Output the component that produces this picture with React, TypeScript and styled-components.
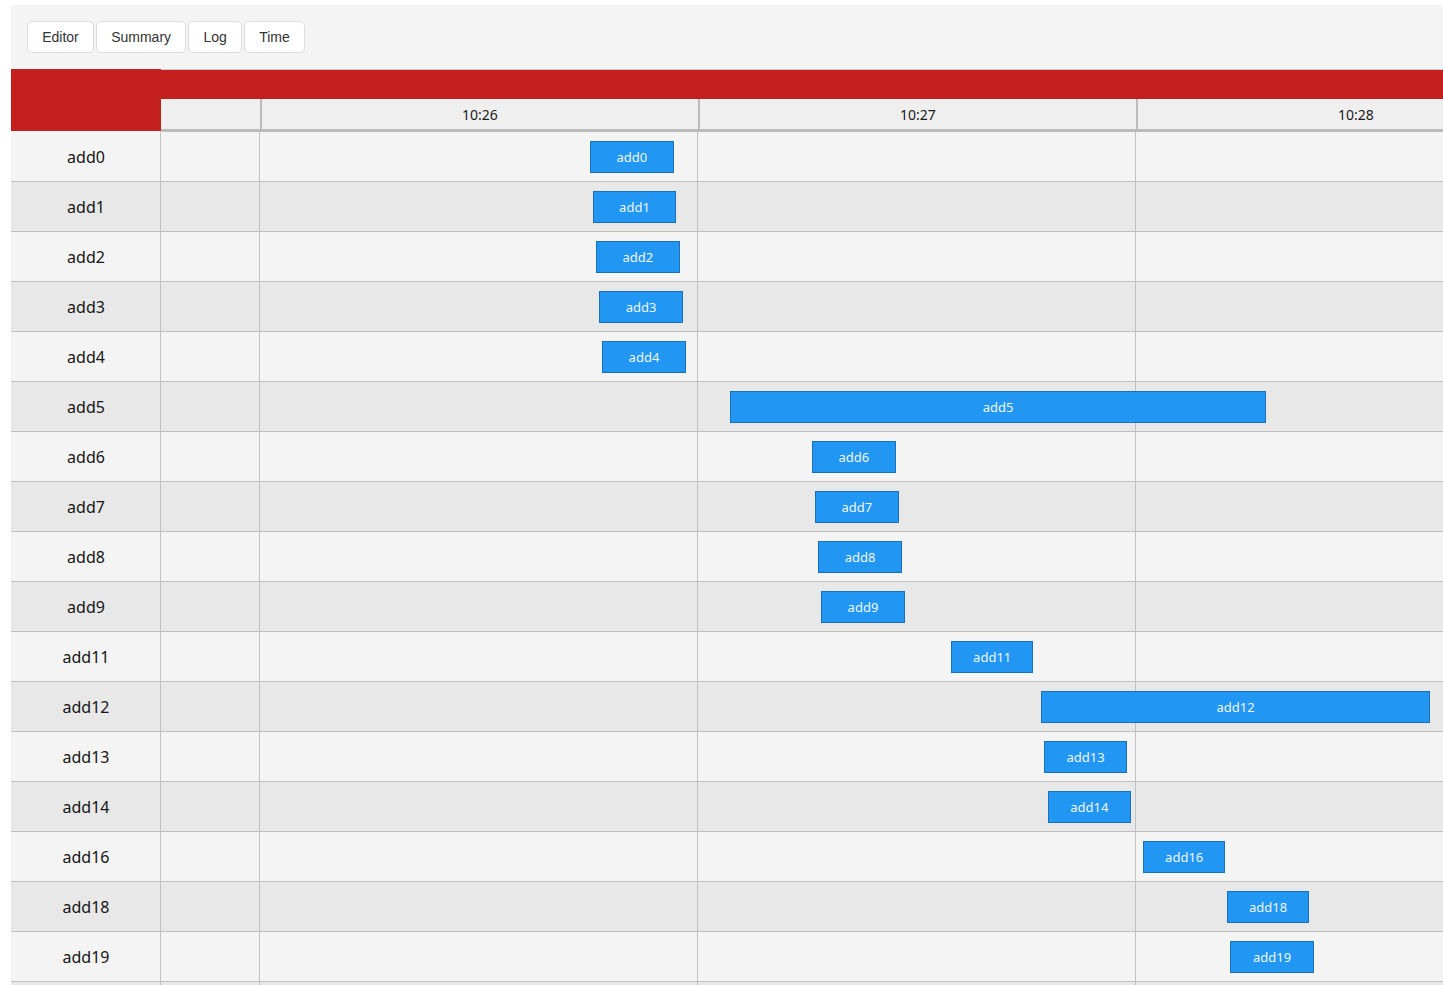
import React from "react";
import styled, { createGlobalStyle } from "styled-components";

const Global = createGlobalStyle`
  html, body { margin: 0; padding: 0; background: #ffffff; overflow: hidden; }
  * { box-sizing: border-box; }
`;

const PX_PER_SEC = 7.3;
const MINUTE = 60 * PX_PER_SEC; // 438
const FIRST_OFFSET = 99; // px from timeline start to 10:26

type Task = { name: string; start: number; dur: number };

const tasks: Task[] = [
  { name: "add0", start: 45.2, dur: 11.5 },
  { name: "add1", start: 45.6, dur: 11.4 },
  { name: "add2", start: 46.0, dur: 11.5 },
  { name: "add3", start: 46.4, dur: 11.6 },
  { name: "add4", start: 46.8, dur: 11.6 },
  { name: "add5", start: 64.4, dur: 73.4 },
  { name: "add6", start: 75.6, dur: 11.5 },
  { name: "add7", start: 76.0, dur: 11.5 },
  { name: "add8", start: 76.4, dur: 11.6 },
  { name: "add9", start: 76.8, dur: 11.6 },
  { name: "add11", start: 94.7, dur: 11.2 },
  { name: "add12", start: 107.0, dur: 53.3 },
  { name: "add13", start: 107.4, dur: 11.4 },
  { name: "add14", start: 107.9, dur: 11.4 },
  { name: "add16", start: 121.0, dur: 11.2 },
  { name: "add18", start: 132.5, dur: 11.2 },
  { name: "add19", start: 132.9, dur: 11.5 },
  { name: "add20", start: 145.0, dur: 11.4 },
];

const ticks = ["10:26", "10:27", "10:28", "10:29"];

const Page = styled.div`
  padding: 5px 0 0 11px;
  width: 100vw;
  height: 100vh;
  overflow: hidden;
`;

const Panel = styled.div`
  background: #f4f4f4;
  width: 100%;
  min-height: 100%;
  overflow: hidden;
`;

const Toolbar = styled.div`
  display: flex;
  gap: 2px;
  padding: 16px 16px 16px;
`;

const TabButton = styled.button`
  height: 32px;
  padding: 0 14.2px;
  margin: 0;
  background: #ffffff;
  border: 1px solid #dcdcdc;
  border-radius: 5px;
  font-family: "Liberation Sans", Arial, sans-serif;
  font-size: 14px;
  color: #333333;
  cursor: pointer;
`;

const Chart = styled.div`
  display: flex;
  flex-direction: column;
  width: max-content;
`;

const HeaderRow = styled.div`
  display: flex;
  height: 63px;
`;

const Corner = styled.div`
  width: 150px;
  height: 62px;
  background: #c41f1f;
  flex: none;
`;

const HeaderTimeline = styled.div`
  display: flex;
  flex-direction: column;
  border-top: 1px solid #cccccc;
`;

const RedBand = styled.div`
  height: 29px;
  background: #c41f1f;
`;

const TickRow = styled.div`
  display: flex;
  height: 33px;
  background: #efefef;
  border-bottom: 3px solid #bbbbbb;
`;

const TickCell = styled.div<{ $w: number; $edge?: boolean }>`
  width: ${(p) => p.$w}px;
  flex: none;
  border-left: ${(p) => (p.$edge ? "none" : "2px solid #bbbbbb")};
  display: flex;
  align-items: center;
  justify-content: center;
  font-family: "Noto Sans", "Open Sans", sans-serif;
  font-size: 14px;
  color: #1a1a1a;
`;

const Row = styled.div<{ $alt: boolean }>`
  display: flex;
  height: 50px;
  background: ${(p) => (p.$alt ? "#e8e8e8" : "#f4f4f4")};
  border-bottom: 1px solid #c0c0c0;
`;

const Label = styled.div`
  width: 150px;
  flex: none;
  border-right: 1px solid #c0c0c0;
  display: flex;
  align-items: center;
  justify-content: center;
  padding-left: 1px;
  font-family: "Noto Sans", "Open Sans", sans-serif;
  font-size: 16px;
  color: #151515;
`;

const Track = styled.div`
  position: relative;
  display: flex;
`;

const GridCell = styled.div<{ $w: number }>`
  width: ${(p) => p.$w}px;
  flex: none;
  border-right: 1px solid #c0c0c0;
`;

const Bar = styled.div`
  position: absolute;
  top: 9px;
  height: 32px;
  background: #2196f3;
  border: 1px solid #1a6fb8;
  display: flex;
  align-items: center;
  justify-content: center;
  font-family: "Noto Sans", "Open Sans", sans-serif;
  font-size: 13px;
  color: #eef6ff;
  white-space: nowrap;
`;

export default function App() {
  const tabs = ["Editor", "Summary", "Log", "Time"];
  return (
    <>
      <Global />
      <Page>
        <Panel>
          <Toolbar>
            {tabs.map((t) => (
              <TabButton key={t}>{t}</TabButton>
            ))}
          </Toolbar>
          <Chart>
            <HeaderRow>
              <Corner />
              <HeaderTimeline>
                <RedBand />
                <TickRow>
                  <TickCell $w={FIRST_OFFSET} $edge />
                  {ticks.map((t) => (
                    <TickCell key={t} $w={MINUTE}>
                      {t}
                    </TickCell>
                  ))}
                </TickRow>
              </HeaderTimeline>
            </HeaderRow>
            {tasks.map((task, i) => (
              <Row key={task.name} $alt={i % 2 === 1}>
                <Label>{task.name}</Label>
                <Track>
                  <GridCell $w={FIRST_OFFSET} />
                  {ticks.map((t) => (
                    <GridCell key={t} $w={MINUTE} />
                  ))}
                  <Bar
                    style={{
                      left: FIRST_OFFSET + task.start * PX_PER_SEC,
                      width: task.dur * PX_PER_SEC,
                    }}
                  >
                    {task.name}
                  </Bar>
                </Track>
              </Row>
            ))}
          </Chart>
        </Panel>
      </Page>
    </>
  );
}
